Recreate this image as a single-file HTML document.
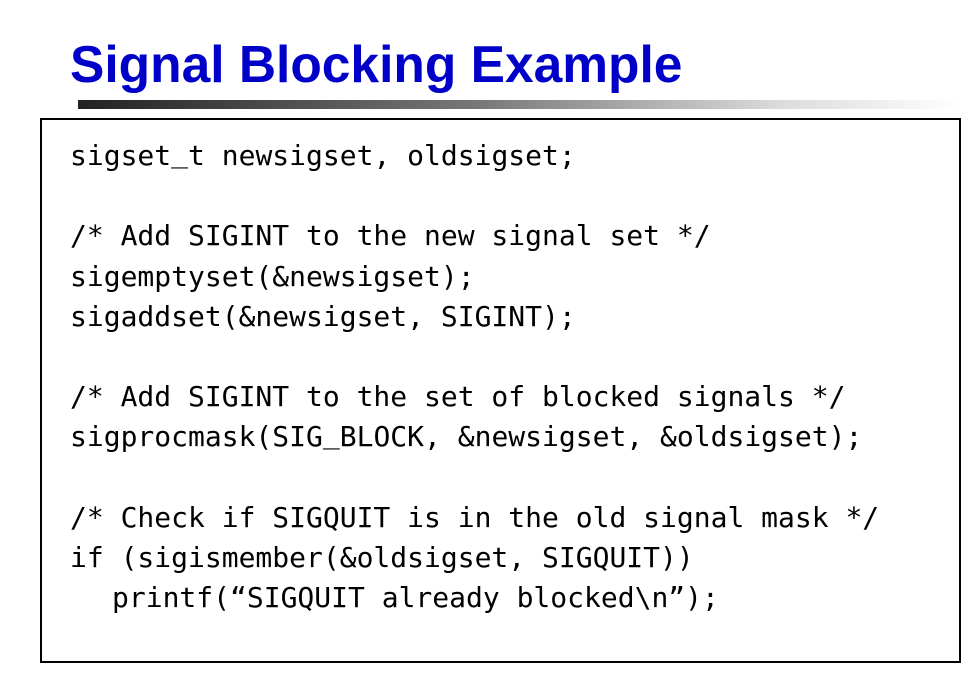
<!DOCTYPE html>
<html><head><style>
html,body{margin:0;padding:0;background:#fff;width:980px;height:698px;overflow:hidden;position:relative}
.t{position:absolute;left:70px;top:29px;font:bold 51.5px "Liberation Sans",sans-serif;color:#0000c8;white-space:nowrap;line-height:70px}
.bar{position:absolute;left:78px;top:100px;width:885px;height:9px;background:linear-gradient(to right,#222 0%,#777 45%,#ddd 80%,#fff 100%)}
.box{position:absolute;left:40px;top:118px;width:917px;height:541px;border:2px solid #000}
pre{position:absolute;left:70px;top:136px;margin:0;font:28px "DejaVu Sans Mono",monospace;line-height:40.2px;color:#000}
.i{display:inline-block;width:42px}
.u{position:relative;top:-3px}
</style></head><body>
<div class="t">Signal Blocking Example</div>
<div class="bar"></div>
<div class="box"></div>
<pre>sigset<span class="u">_</span>t newsigset, oldsigset;

/* Add SIGINT to the new signal set */
sigemptyset(&amp;newsigset);
sigaddset(&amp;newsigset, SIGINT);

/* Add SIGINT to the set of blocked signals */
sigprocmask(SIG<span class="u">_</span>BLOCK, &amp;newsigset, &amp;oldsigset);

/* Check if SIGQUIT is in the old signal mask */
if (sigismember(&amp;oldsigset, SIGQUIT))
<span class="i"></span>printf(“SIGQUIT already blocked\n”);</pre>
</body></html>
